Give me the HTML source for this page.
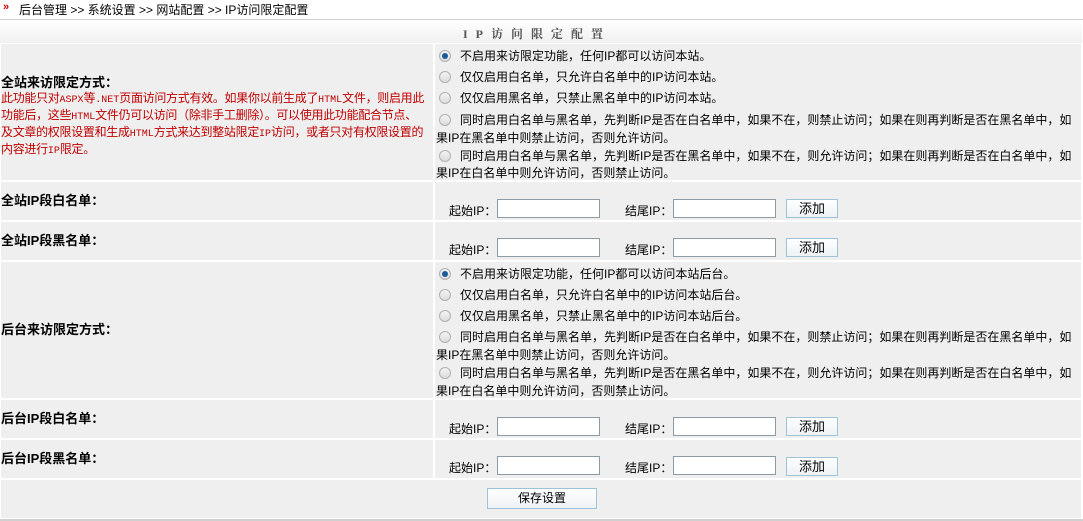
<!DOCTYPE html>
<html><head><meta charset="utf-8"><style>
body{margin:0;width:1083px;height:521px;background:#fff;font-family:"Liberation Sans","Noto Sans CJK SC",sans-serif;font-size:12px;color:#000;position:relative;overflow:hidden}
.a{position:absolute;white-space:nowrap}
.bg{position:absolute;background:#efefef}
.r{position:absolute;width:12px;height:12px;border:1px solid #b0b0b0;border-radius:50%;background:linear-gradient(#f4f4f4,#dcdcdc);box-sizing:border-box}
.r.on::after{content:"";position:absolute;left:2px;top:2px;width:6px;height:6px;border-radius:50%;background:#1a5c9a}
.in{position:absolute;width:103px;height:19px;border:1px solid #8c9ba5;background:#fff;box-sizing:border-box}
.bt{position:absolute;width:52px;height:19px;border:1px solid #9ec3d6;background:linear-gradient(#fff,#eef2f5);box-sizing:border-box;text-align:center;line-height:17px;font-size:13px}
b{font-size:13px;line-height:14px}
.red{color:#c00000;line-height:15px;font-size:12px;letter-spacing:-0.3px}
.red span{font-family:"Liberation Mono",monospace;font-size:10px;letter-spacing:0}
</style></head><body>
<div class="a" style="left:3px;top:1px;color:#c00;font-size:11px;font-weight:bold">»</div>
<div class="a" style="left:19px;top:1px;font-size:12px">后台管理 &gt;&gt; 系统设置 &gt;&gt; 网站配置 &gt;&gt; IP访问限定配置</div>
<div style="position:absolute;left:0;top:19px;width:1083px;height:1px;background:#d0d0d0"></div>
<div style="position:absolute;left:0;top:21px;width:1082px;height:22px;background:linear-gradient(#fff,#f0f0f0)"></div>
<div class="a" style="left:463px;top:25px;font-weight:bold;color:#555;letter-spacing:8px;font-family:'Liberation Serif','Noto Serif CJK SC',serif">IP访问限定配置</div>

<div class="bg" style="left:1px;top:44px;width:432px;height:136px"></div><div class="bg" style="left:435px;top:44px;width:646px;height:136px"></div>
<div class="bg" style="left:1px;top:182px;width:432px;height:38px"></div><div class="bg" style="left:435px;top:182px;width:646px;height:38px"></div>
<div class="bg" style="left:1px;top:222px;width:432px;height:38px"></div><div class="bg" style="left:435px;top:222px;width:646px;height:38px"></div>
<div class="bg" style="left:1px;top:262px;width:432px;height:136px"></div><div class="bg" style="left:435px;top:262px;width:646px;height:136px"></div>
<div class="bg" style="left:1px;top:400px;width:432px;height:38px"></div><div class="bg" style="left:435px;top:400px;width:646px;height:38px"></div>
<div class="bg" style="left:1px;top:440px;width:432px;height:38px"></div><div class="bg" style="left:435px;top:440px;width:646px;height:38px"></div>
<div class="bg" style="left:1px;top:480px;width:1080px;height:38px"></div>
<div style="position:absolute;left:0;top:519px;width:1083px;height:2px;background:#d0d0d0"></div>

<div class="a" style="left:1px;top:76px"><b>全站来访限定方式：</b></div>
<div class="a red" style="left:1px;top:91px">此功能只对<span>ASPX</span>等<span>.NET</span>页面访问方式有效。如果你以前生成了<span>HTML</span>文件，则启用此<br>功能后，这些<span>HTML</span>文件仍可以访问（除非手工删除）。可以使用此功能配合节点、<br>及文章的权限设置和生成<span>HTML</span>方式来达到整站限定<span>IP</span>访问，或者只对有权限设置的<br>内容进行<span>IP</span>限定。</div>

<div class="r on" style="left:439px;top:50px"></div><div class="a" style="left:460px;top:47px">不启用来访限定功能，任何IP都可以访问本站。</div>
<div class="r" style="left:439px;top:71px"></div><div class="a" style="left:460px;top:68px">仅仅启用白名单，只允许白名单中的IP访问本站。</div>
<div class="r" style="left:439px;top:92px"></div><div class="a" style="left:460px;top:89px">仅仅启用黑名单，只禁止黑名单中的IP访问本站。</div>
<div class="r" style="left:439px;top:114px"></div><div class="a" style="left:460px;top:111px">同时启用白名单与黑名单，先判断IP是否在白名单中，如果不在，则禁止访问；如果在则再判断是否在黑名单中，如</div>
<div class="a" style="left:436px;top:129px">果IP在黑名单中则禁止访问，否则允许访问。</div>
<div class="r" style="left:439px;top:150px"></div><div class="a" style="left:460px;top:147px">同时启用白名单与黑名单，先判断IP是否在黑名单中，如果不在，则允许访问；如果在则再判断是否在白名单中，如</div>
<div class="a" style="left:436px;top:164px">果IP在白名单中则允许访问，否则禁止访问。</div>

<div class="a" style="left:1px;top:194px"><b>全站IP段白名单：</b></div>
<div class="a" style="left:449px;top:202px">起始IP：</div><div class="in" style="left:497px;top:199px"></div>
<div class="a" style="left:625px;top:202px">结尾IP：</div><div class="in" style="left:673px;top:199px"></div>
<div class="bt" style="left:786px;top:199px">添加</div>
<div class="a" style="left:1px;top:234px"><b>全站IP段黑名单：</b></div>
<div class="a" style="left:449px;top:241px">起始IP：</div><div class="in" style="left:497px;top:238px"></div>
<div class="a" style="left:625px;top:241px">结尾IP：</div><div class="in" style="left:673px;top:238px"></div>
<div class="bt" style="left:786px;top:238px">添加</div>

<div class="a" style="left:1px;top:323px"><b>后台来访限定方式：</b></div>
<div class="r on" style="left:439px;top:268px"></div><div class="a" style="left:460px;top:265px">不启用来访限定功能，任何IP都可以访问本站后台。</div>
<div class="r" style="left:439px;top:289px"></div><div class="a" style="left:460px;top:286px">仅仅启用白名单，只允许白名单中的IP访问本站后台。</div>
<div class="r" style="left:439px;top:310px"></div><div class="a" style="left:460px;top:307px">仅仅启用黑名单，只禁止黑名单中的IP访问本站后台。</div>
<div class="r" style="left:439px;top:331px"></div><div class="a" style="left:460px;top:328px">同时启用白名单与黑名单，先判断IP是否在白名单中，如果不在，则禁止访问；如果在则再判断是否在黑名单中，如</div>
<div class="a" style="left:436px;top:346px">果IP在黑名单中则禁止访问，否则允许访问。</div>
<div class="r" style="left:439px;top:367px"></div><div class="a" style="left:460px;top:364px">同时启用白名单与黑名单，先判断IP是否在黑名单中，如果不在，则允许访问；如果在则再判断是否在白名单中，如</div>
<div class="a" style="left:436px;top:382px">果IP在白名单中则允许访问，否则禁止访问。</div>

<div class="a" style="left:1px;top:412px"><b>后台IP段白名单：</b></div>
<div class="a" style="left:449px;top:420px">起始IP：</div><div class="in" style="left:497px;top:417px"></div>
<div class="a" style="left:625px;top:420px">结尾IP：</div><div class="in" style="left:673px;top:417px"></div>
<div class="bt" style="left:786px;top:417px">添加</div>
<div class="a" style="left:1px;top:452px"><b>后台IP段黑名单：</b></div>
<div class="a" style="left:449px;top:459px">起始IP：</div><div class="in" style="left:497px;top:456px"></div>
<div class="a" style="left:625px;top:459px">结尾IP：</div><div class="in" style="left:673px;top:456px"></div>
<div class="bt" style="left:786px;top:457px">添加</div>

<div class="bt" style="left:487px;top:488px;width:110px;height:21px;line-height:19px;font-size:12px">保存设置</div>
</body></html>
